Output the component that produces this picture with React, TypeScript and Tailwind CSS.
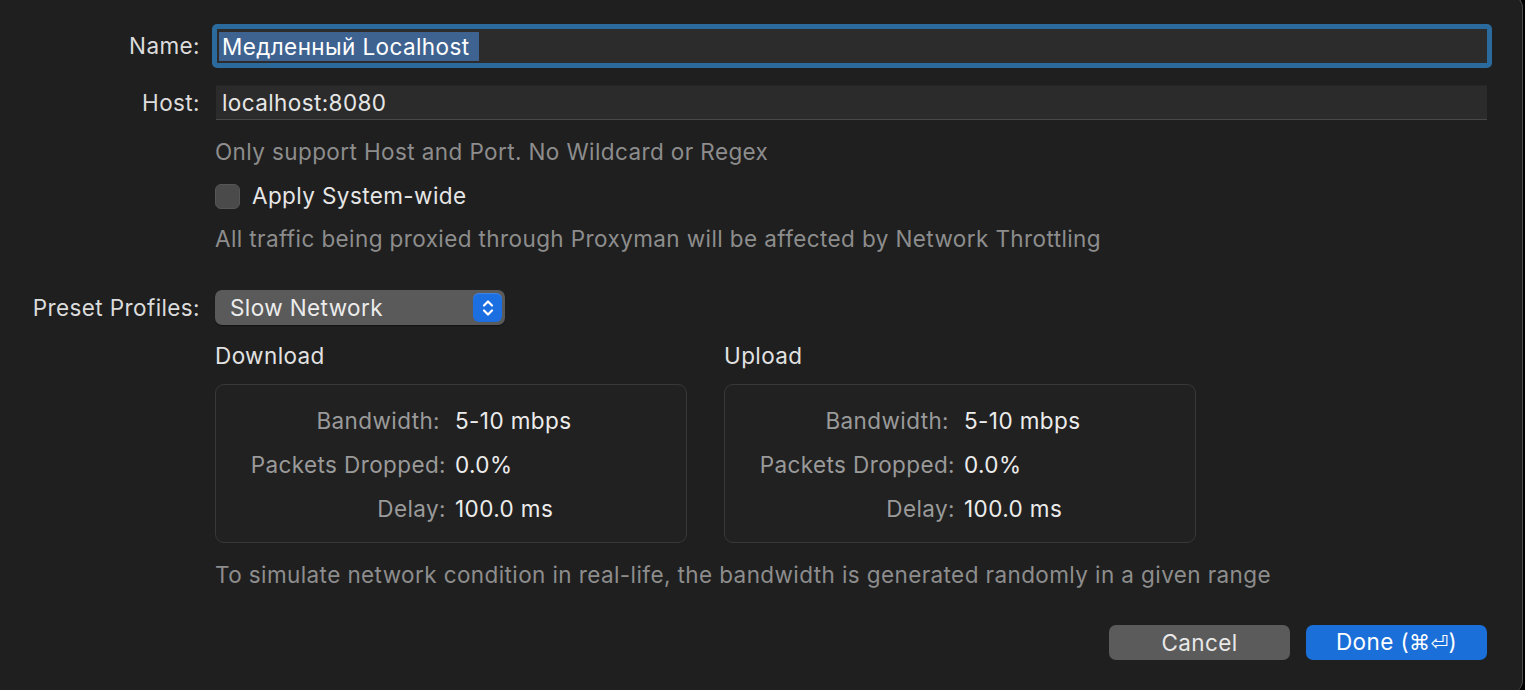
import React from "react";

function Stepper() {
  return (
    <div className="w-[29px] h-[29px] rounded-[6px] bg-[#1c6fe0] flex items-center justify-center shadow-[inset_0_1px_0_rgba(255,255,255,0.15)]">
      <svg width="14" height="20" viewBox="0 0 14 20" fill="none" stroke="white" strokeWidth="2.2" strokeLinecap="round" strokeLinejoin="round">
        <path d="M3 7.5 L7 3.5 L11 7.5" />
        <path d="M3 12.5 L7 16.5 L11 12.5" />
      </svg>
    </div>
  );
}

function StatBox({ title }: { title: string }) {
  const rows = [
    { label: "Bandwidth:", value: "5-10 mbps", pad: true },
    { label: "Packets Dropped:", value: "0.0%", pad: false },
    { label: "Delay:", value: "100.0 ms", pad: false },
  ];
  return (
    <div className="w-[472px]">
      <p className="leading-[24px] text-[#e2e2e2]">{title}</p>
      <div className="mt-[16px] h-[159px] rounded-[9px] border border-[#383838] bg-[#212121] pt-[14px]">
        {rows.map((r) => (
          <div key={r.label} className="flex items-center h-[44px]">
            <span className={`w-[230px] text-right text-[#9a9a9a] whitespace-nowrap ${r.pad ? "pr-[6px]" : ""}`}>{r.label}</span>
            <span className="ml-[9px] text-[#ececec]">{r.value}</span>
          </div>
        ))}
      </div>
    </div>
  );
}

export default function App() {
  return (
    <div className="w-[1525px] h-[690px] bg-black overflow-hidden" style={{ fontFamily: "Inter, 'Noto Sans', sans-serif" }}>
      <div className="w-[1523px] h-[700px] -mt-[6px] bg-[#1f1f1f] rounded-r-[14px] border-r border-t border-[#4c4c4c] text-[22.5px] tracking-[0.4px]">
        <div className="pt-[29px]">
          {/* Name */}
          <div className="flex items-center h-[44px]">
            <span className="w-[200px] text-right text-[#dcdcdc]">Name:</span>
            <div className="ml-[12px] w-[1280px] h-[44px] rounded-[5px] bg-[#2a6a9c] p-[5px]">
              <div className="h-full bg-[#2c2c2c] flex items-center px-[2px]">
                <span className="bg-[#3f6390] text-white px-[3px] leading-[29px] whitespace-nowrap">Медленный Localhost&nbsp;</span>
              </div>
            </div>
          </div>

          {/* Host */}
          <div className="flex items-center h-[35px] mt-[17px]">
            <span className="w-[200px] text-right text-[#dcdcdc]">Host:</span>
            <div className="ml-[16px] w-[1271px] h-[35px] bg-[#2b2b2b] border-b border-[#484848] border-t border-t-[#262626] flex items-center px-[6px] text-[#e6e6e6]">
              localhost:8080
            </div>
          </div>

          <div className="pl-[215px]">
            <p className="mt-[20px] leading-[24px] text-[#8d8d8d]">Only support Host and Port. No Wildcard or Regex</p>
            <label className="mt-[19px] flex items-center h-[26px]">
              <span className="w-[25px] h-[25px] rounded-[6px] bg-[#4a4a4a] border border-[#555]" />
              <span className="ml-[12px] text-[#e6e6e6]">Apply System-wide</span>
            </label>
            <p className="mt-[18px] leading-[24px] text-[#8d8d8d]">All traffic being proxied through Proxyman will be affected by Network Throttling</p>
          </div>

          {/* Preset */}
          <div className="flex items-center h-[35px] mt-[39px]">
            <span className="w-[200px] text-right text-[#dcdcdc] whitespace-nowrap">Preset Profiles:</span>
            <div className="ml-[15px] w-[290px] h-[35px] rounded-[7px] bg-[#5a5a5a] flex items-center pl-[15px] pr-[3px] shadow-[0_1px_1px_rgba(0,0,0,0.4)]">
              <span className="flex-1 text-[#ececec]">Slow Network</span>
              <Stepper />
            </div>
          </div>

          <div className="pl-[215px] mt-[19px] flex gap-[37px]">
            <StatBox title="Download" />
            <StatBox title="Upload" />
          </div>

          <p className="pl-[215px] mt-[20px] leading-[24px] text-[#8d8d8d]">
            To simulate network condition in real-life, the bandwidth is generated randomly in a given range
          </p>

          <div className="mt-[38px] flex justify-end gap-[16px] pr-[35px]">
            <button className="w-[181px] h-[35px] rounded-[7px] bg-[#5b5b5b] text-[#e8e8e8]">Cancel</button>
            <button className="w-[181px] h-[35px] rounded-[7px] bg-[#1b6fd8] text-white">
              Done (<span style={{ fontFamily: "'DejaVu Sans', sans-serif" }} className="text-[21px]">⌘⏎</span>)
            </button>
          </div>
        </div>
      </div>
    </div>
  );
}
